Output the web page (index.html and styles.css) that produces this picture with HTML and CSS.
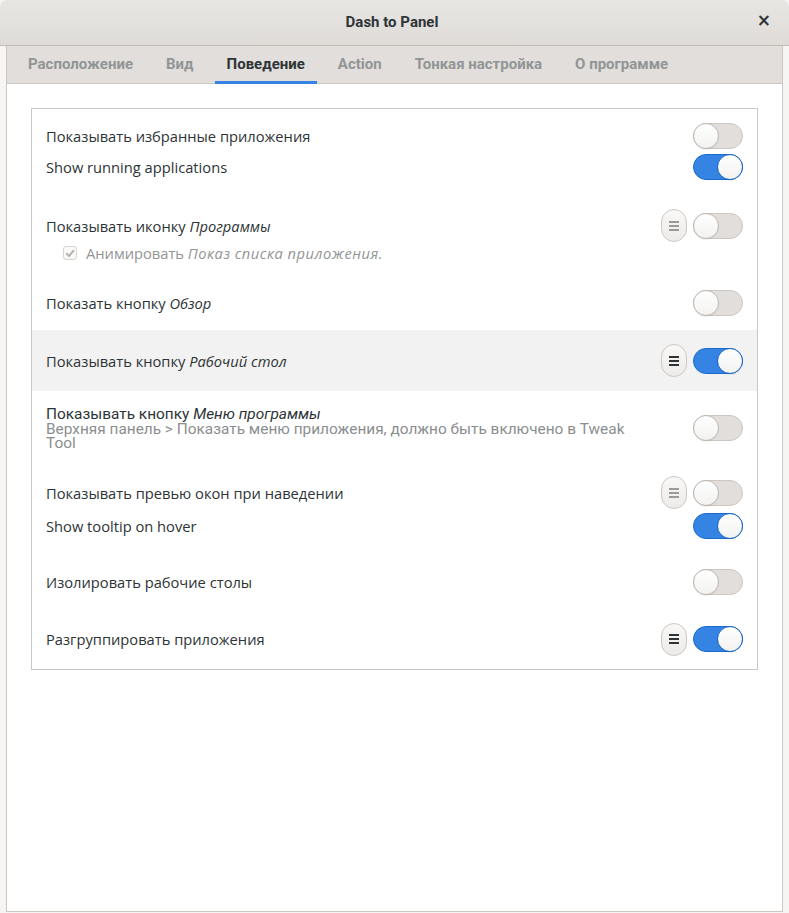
FILE: index.html
```html
<!DOCTYPE html>
<html lang="ru">
<head>
<meta charset="utf-8">
<title>Dash to Panel</title>
<link rel="stylesheet" href="styles.css">
</head>
<body>
<div class="window">
  <header class="titlebar">
    <span class="title">Dash to Panel</span>
    <span class="close">×</span>
  </header>
  <div class="content">
    <div class="notebook">
      <nav class="tabs">
        <span class="tab">Расположение</span>
        <span class="tab">Вид</span>
        <span class="tab active">Поведение</span>
        <span class="tab">Action</span>
        <span class="tab">Тонкая настройка</span>
        <span class="tab">О программе</span>
      </nav>
      <div class="page">
        <div class="list">
          <div class="row r1">
            <div class="line">
              <span class="label">Показывать избранные приложения</span>
              <span class="switch"><span class="knob"></span></span>
            </div>
            <div class="line">
              <span class="label">Show running applications</span>
              <span class="switch on"><span class="knob"></span></span>
            </div>
          </div>
          <div class="row r2">
            <div class="line tall">
              <span class="label">Показывать иконку <i>Программы</i></span>
              <span class="controls">
                <span class="menu-btn dim"><span></span><span></span><span></span></span>
                <span class="switch"><span class="knob"></span></span>
              </span>
            </div>
            <div class="check-line">
              <span class="checkbox">
                <svg viewBox="0 0 14 14" width="14" height="14"><path d="M3.2 7.2 L6 10 L11 4.2" fill="none" stroke="#b5b3b0" stroke-width="2"/></svg>
              </span>
              <span class="check-label">Анимировать <i>Показ списка приложения.</i></span>
            </div>
          </div>
          <div class="row single r3">
            <span class="label">Показать кнопку <i>Обзор</i></span>
            <span class="switch"><span class="knob"></span></span>
          </div>
          <div class="row single r4 hl">
            <span class="label">Показывать кнопку <i>Рабочий стол</i></span>
            <span class="controls">
              <span class="menu-btn"><span></span><span></span><span></span></span>
              <span class="switch on"><span class="knob"></span></span>
            </span>
          </div>
          <div class="row single r5">
            <div class="textblock">
              <div class="label cond">Показывать кнопку <i>Меню программы</i></div>
              <div class="sub">Верхняя панель &gt; Показать меню приложения, должно быть включено в Tweak Tool</div>
            </div>
            <span class="switch"><span class="knob"></span></span>
          </div>
          <div class="row r6">
            <div class="line tall">
              <span class="label">Показывать превью окон при наведении</span>
              <span class="controls">
                <span class="menu-btn dim"><span></span><span></span><span></span></span>
                <span class="switch"><span class="knob"></span></span>
              </span>
            </div>
            <div class="line">
              <span class="label">Show tooltip on hover</span>
              <span class="switch on"><span class="knob"></span></span>
            </div>
          </div>
          <div class="row single r7">
            <span class="label">Изолировать рабочие столы</span>
            <span class="switch"><span class="knob"></span></span>
          </div>
          <div class="row single r8">
            <span class="label">Разгруппировать приложения</span>
            <span class="controls">
              <span class="menu-btn"><span></span><span></span><span></span></span>
              <span class="switch on"><span class="knob"></span></span>
            </span>
          </div>
        </div>
      </div>
    </div>
  </div>
</div>
</body>
</html>
```

FILE: styles.css
```css
* { box-sizing: border-box; }
html, body { margin: 0; padding: 0; }
body {
  width: 789px;
  height: 913px;
  overflow: hidden;
  background: #f6f5f4;
  font-family: "Open Sans", "Noto Sans", sans-serif;
  color: #2e3436;
}
.window {
  height: 913px;
  display: flex;
  flex-direction: column;
}
.titlebar {
  height: 46px;
  flex: none;
  display: flex;
  align-items: center;
  justify-content: center;
  position: relative;
  background: linear-gradient(#e8e6e3, #dedbd7);
  border-bottom: 1px solid #c2bcb6;
  border-radius: 7px 7px 0 0;
  padding-right: 5px;
}
.title {
  font-family: "Roboto", sans-serif;
  font-weight: 700;
  font-size: 15px;
  color: #2e3436;
  margin-top: -2px;
}
.close {
  position: absolute;
  right: 18px;
  top: 10px;
  font-family: "DejaVu Sans", sans-serif;
  font-size: 17px;
  font-weight: 700;
  color: #2e3436;
}
.content {
  flex: 1;
  display: flex;
  flex-direction: column;
  padding: 0 6px 1px 6px;
}
.notebook {
  flex: 1;
  display: flex;
  flex-direction: column;
  border: 1px solid #cdc7c2;
  border-top: none;
  background: #ffffff;
}
.tabs {
  height: 38px;
  flex: none;
  display: flex;
  gap: 9px;
  padding-left: 9px;
  background: #e1dedb;
  border-bottom: 1px solid #cdc7c2;
}
.tab {
  display: flex;
  align-items: center;
  padding: 0 12px;
  margin-bottom: -1px;
  border-bottom: 3px solid transparent;
  font-family: "Roboto", sans-serif;
  font-weight: 700;
  font-size: 15px;
  color: #929595;
  padding-top: 1px;
}
.tab.active {
  color: #2e3436;
  border-bottom-color: #3584e4;
}
.page {
  flex: 1;
  padding: 24px 24px;
}
.list {
  border: 1px solid #cdc7c2;
  background: #ffffff;
}
.row {
  padding: 0 14px 0 14px;
}
.row.single {
  display: flex;
  align-items: center;
  justify-content: space-between;
}
.line {
  height: 26px;
  display: flex;
  align-items: center;
  justify-content: space-between;
}
.line.tall { height: 33px; }
.r1 { height: 85px; padding-top: 14px; }
.r1 .line + .line { margin-top: 5px; }
.r2 { height: 82px; padding-top: 15px; }
.r3 { height: 54px; }
.r4 { height: 61px; }
.r5 { height: 73px; }
.r6 { height: 90px; padding-top: 12px; }
.r6 .line + .line { margin-top: 4px; }
.r7 { height: 55px; }
.r8 { height: 60px; }
.hl { background: #f2f2f2; }
.label {
  font-size: 14.7px;
  color: #2e3436;
}
.controls {
  display: flex;
  align-items: center;
  gap: 6px;
}
.switch {
  width: 50px;
  height: 26px;
  border-radius: 13px;
  background: #e1dedb;
  border: 1px solid #cdc7c2;
  display: flex;
  align-items: center;
  justify-content: flex-start;
  flex: none;
}
.switch .knob {
  width: 26px;
  height: 26px;
  margin: -1px;
  border-radius: 50%;
  background: linear-gradient(#ffffff, #f3f2f1);
  border: 1px solid #bfb8b1;
  box-shadow: 0 1px 1px rgba(0,0,0,0.06);
}
.switch.on {
  background: #3584e4;
  border-color: #1b6acb;
  justify-content: flex-end;
}
.switch.on .knob { border-color: #1b6acb; }
.menu-btn {
  width: 26px;
  height: 33px;
  border-radius: 13px;
  border: 1px solid #cdc7c2;
  background: linear-gradient(#f9f8f7, #edebe9);
  display: flex;
  flex-direction: column;
  align-items: center;
  justify-content: center;
  gap: 2px;
  flex: none;
}
.menu-btn span {
  width: 10px;
  height: 2px;
  background: #2e3436;
}
.menu-btn.dim span { background: #9a9a9a; }
.check-line {
  height: 22px;
  display: flex;
  align-items: center;
  padding-left: 17px;
  gap: 9px;
}
.checkbox {
  width: 14px;
  height: 14px;
  border: 1px solid #d8d4d0;
  border-radius: 3px;
  background: #faf9f8;
  display: flex;
}
.checkbox svg { margin: -1px; }
.check-label {
  font-size: 14.7px;
  color: #929595;
}
.check-label i { letter-spacing: 0.5px; }
.textblock { padding-top: 2px; }
.label.cond {
  font-family: "Roboto", sans-serif;
  font-size: 15.4px;
  line-height: 15px;
}
.sub {
  font-family: "Roboto", sans-serif;
  font-size: 15.4px;
  line-height: 14px;
  color: #8b8e8f;
  max-width: 600px;
}
```
